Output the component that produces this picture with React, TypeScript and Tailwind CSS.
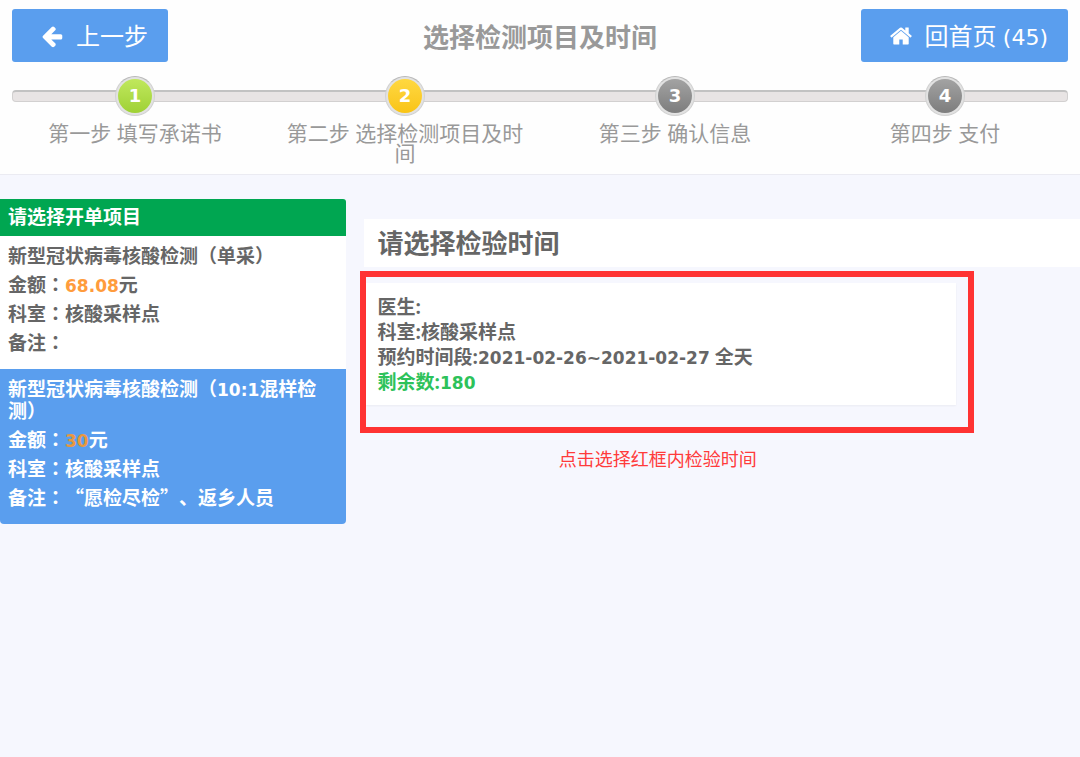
const steps = [
  { no: 1, label: '第一步 填写承诺书', dot: 'bg-linear-to-b from-[#c0e85c] to-[#9fd134]' },
  { no: 2, label: '第二步 选择检测项目及时间', dot: 'bg-linear-to-b from-[#ffd83f] to-[#f9c414]' },
  { no: 3, label: '第三步 确认信息', dot: 'bg-linear-to-b from-[#a3a3a3] to-[#7d7d7d]' },
  { no: 4, label: '第四步 支付', dot: 'bg-linear-to-b from-[#a3a3a3] to-[#7d7d7d]' },
]

const ArrowIcon = () => (
  <svg className="size-6" viewBox="0 0 1792 1792" fill="currentColor" aria-hidden="true">
    <path d="M1664 896v128q0 53-32.5 90.5t-84.5 37.5h-704l293 294q38 36 38 90t-38 90l-75 76q-37 37-90 37-52 0-91-37l-651-652q-37-37-37-90 0-52 37-91l651-650q38-38 91-38 52 0 90 38l75 74q38 38 38 91t-38 91l-293 293h704q52 0 84.5 37.5t32.5 90.5z" />
  </svg>
)

const HomeIcon = () => (
  <svg className="size-6" viewBox="0 0 1792 1792" fill="currentColor" aria-hidden="true">
    <path d="M1472 992v480q0 26-19 45t-45 19h-384v-384h-256v384h-384q-26 0-45-19t-19-45v-480q0-1 .5-3t.5-3l575-474 575 474q1 2 1 6zm223-69l-62 74q-8 9-21 11h-3q-13 0-21-7l-692-577-692 577q-12 8-24 7-13-2-21-11l-62-74q-8-10-7-23.5t11-21.5l719-599q32-26 76-26t76 26l244 204v-195q0-14 9-23t23-9h192q14 0 23 9t9 23v408l219 182q10 8 11 21.5t-7 23.5z" />
  </svg>
)

// centred full-width colon
const Colon = () => <span className="font-['Noto_Sans_CJK_TC',sans-serif] leading-none">：</span>

const Num = ({ children }: { children: string }) => (
  <span className="font-['DejaVu_Sans',sans-serif] text-[17px] leading-none">{children}</span>
)

const Header = () => {
  return (
    <header className="border-b border-[#ebebf2] bg-[#fefefe] px-3 pt-[9px] pb-[11px]">
      <div className="flex items-center justify-between">
        <div className="flex flex-1">
          <button className="flex h-[53px] items-center gap-3 rounded-[3px] bg-[#5a9eee] pr-5 pl-7 text-2xl text-white">
            <ArrowIcon />
            上一步
          </button>
        </div>
        <h1 className="pt-1 text-[26px] font-bold text-[#999]">选择检测项目及时间</h1>
        <div className="flex flex-1 justify-end">
          <button className="flex h-[53px] items-center gap-3 rounded-[3px] bg-[#5a9eee] pr-5 pl-7 text-2xl text-white">
            <HomeIcon />
            <span>
              回首页 <span className="font-['DejaVu_Sans',sans-serif] text-[22px] leading-none">(45)</span>
            </span>
          </button>
        </div>
      </div>

      {/* Steps */}
      <div className="relative -mx-3 mt-[14px]">
        <div className="absolute inset-x-3 top-[14px] h-3 rounded-sm border border-t-2 border-[#d2d0d0] border-t-[#c2c2c2] bg-[#e8e4e4]" />
        <ol className="relative grid grid-cols-4">
          {steps.map((s) => (
            <li key={s.no} className="flex flex-col items-center px-2">
              <span className="flex size-10 items-center justify-center rounded-full border border-[#d2d2d2] border-t-[#b8b8b8] bg-[#e2e2e2]">
                <span
                  className={`flex size-[34px] items-center justify-center rounded-full font-['DejaVu_Sans',sans-serif] text-lg font-bold text-white ${s.dot}`}
                >
                  {s.no}
                </span>
              </span>
              <span className="mt-[7px] text-center text-[21px] leading-5 text-[#999]">{s.label}</span>
            </li>
          ))}
        </ol>
      </div>
    </header>
  )
}

const ProjectList = () => {
  const item = 'flex flex-col gap-[7px] px-2 pt-[9px] pb-[15px] text-[19px] leading-[22px] font-bold'
  return (
    <aside className="mt-6 w-[32%]">
      <h2 className="rounded-tr-[3px] bg-[#00a651] px-2 text-[19px] leading-[37px] font-bold text-white">请选择开单项目</h2>
      <div className={`${item} bg-white text-[#666]`}>
        <p>新型冠状病毒核酸检测（单采）</p>
        <p>金额<Colon /><span className="text-[#ff9c3c]"><Num>68.08</Num></span>元</p>
        <p>科室<Colon />核酸采样点</p>
        <p>备注<Colon /></p>
      </div>
      {/* Selected project */}
      <div className={`${item} rounded-b-[4px] bg-[#5a9eee] text-white`}>
        <p>新型冠状病毒核酸检测（<Num>10:1</Num>混样检测）</p>
        <p>金额<Colon /><span className="text-[#e8983f]"><Num>30</Num></span>元</p>
        <p>科室<Colon />核酸采样点</p>
        <p>备注<Colon /><span className="font-['Noto_Sans_CJK_SC',sans-serif] leading-none">“愿检尽检”、返乡人员</span></p>
      </div>
    </aside>
  )
}

const TimePicker = () => {
  return (
    <section className="mt-11 flex flex-1 flex-col">
      <h2 className="ml-1 bg-white px-[14px] text-[26px] leading-12 font-bold text-[#666]">请选择检验时间</h2>
      {/* Highlighted slot */}
      <div className="mt-1 mr-[106px] border-[6px] border-[#ff3333] pt-1.5 pr-3 pb-[22px]">
        <button className="block w-full bg-white px-3 py-3 pb-2.5 text-left text-[19px] leading-[25px] font-bold text-[#666] shadow-xs">
          <span className="block">医生:</span>
          <span className="block">科室:核酸采样点</span>
          <span className="block">预约时间段:<Num>2021-02-26~2021-02-27</Num> 全天</span>
          <span className="block text-[#2dc25a]">剩余数:<Num>180</Num></span>
        </button>
      </div>
      <p className="mt-3 mr-[124px] text-center text-lg text-[#ff3b3b]">点击选择红框内检验时间</p>
    </section>
  )
}

export default function App() {
  return (
    <div className="min-h-screen bg-[#f6f7fe] font-['Open_Sans','Noto_Sans_CJK_SC',sans-serif] [text-spacing-trim:space-all]">
      <Header />
      <main className="flex items-start gap-[14px]">
        <ProjectList />
        <TimePicker />
      </main>
    </div>
  )
}
